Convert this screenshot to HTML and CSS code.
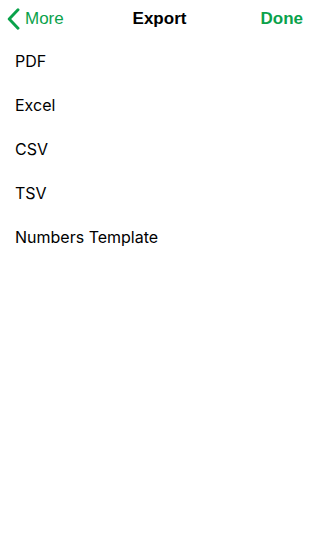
FILE: index.html
```html
<!DOCTYPE html>
<html>
<head>
<meta charset="utf-8">
<link rel="stylesheet" href="styles.css">
</head>
<body>
<div class="nav">
  <a class="back">
    <svg class="chev" width="13" height="22" viewBox="0 0 13 22"><path d="M11 1.8 L2.2 11 L11 20.2" fill="none" stroke="#0aa24b" stroke-width="2.9" stroke-linecap="round" stroke-linejoin="round"/></svg>
    <span>More</span>
  </a>
  <div class="title">Export</div>
  <a class="done">Done</a>
</div>
<ul class="list">
  <li>PDF</li>
  <li>Excel</li>
  <li>CSV</li>
  <li>TSV</li>
  <li>Numbers Template</li>
</ul>
</body>
</html>
```
FILE: styles.css
```css
html, body { margin: 0; padding: 0; background: #fff; }
body { font-family: "Liberation Sans", Arial, sans-serif; color: #000; width: 319px; height: 544px; }
.nav { height: 37px; display: flex; align-items: center; justify-content: space-between; padding: 0 16px 0 7px; position: relative; }
.back { display: flex; align-items: center; gap: 5px; color: #0aa24b; font-size: 17px; }
.chev { display: block; }
.title { position: absolute; left: 0; right: 0; text-align: center; font-weight: bold; font-size: 17px; pointer-events: none; }
.done { color: #0aa24b; font-weight: bold; font-size: 17px; }
.list { list-style: none; margin: 0; padding: 2px 0 0 15px; font-family: Inter, "Liberation Sans", sans-serif; }
.list li { height: 44px; line-height: 44px; font-size: 16px; }
```
